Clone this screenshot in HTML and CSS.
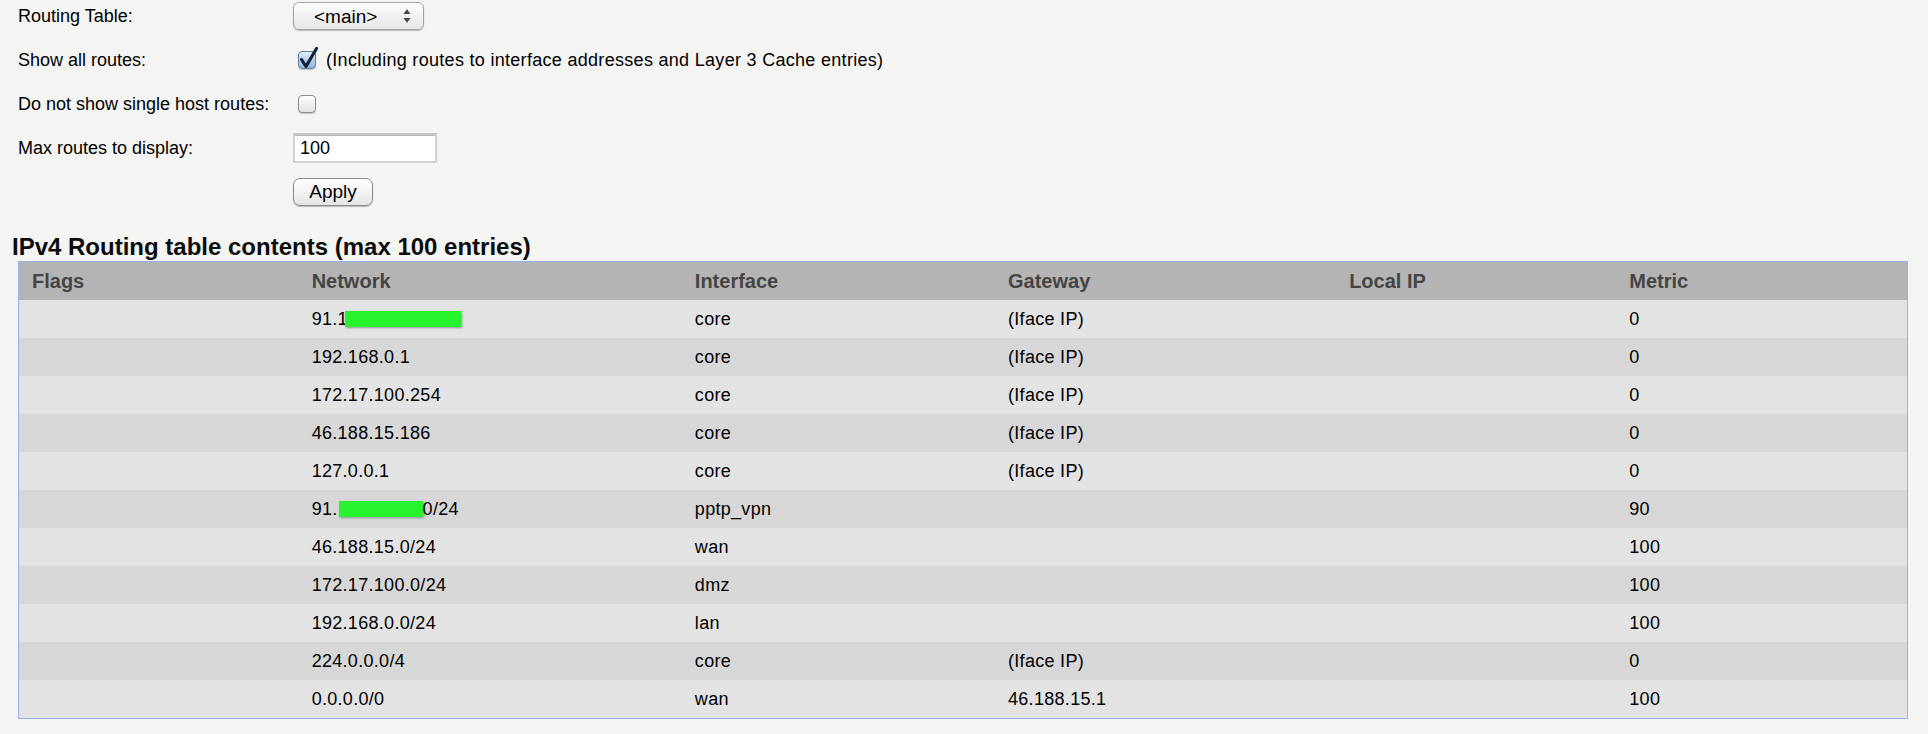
FILE: index.html
```html
<!DOCTYPE html>
<html lang="en">
<head>
    <meta charset="UTF-8">
    <title>Routing Table</title>
    <link rel="stylesheet" href="styles.css">
</head>
<body>

<form class="options">
    <label>Routing Table:</label>
    <div>
        <span class="select-wrap">
            <select class="select">
                <option>&lt;main&gt;</option>
            </select>
            <svg class="select-arrows" width="10" height="18" viewBox="0 0 10 18">
                <path d="M5 2 L8.5 7 L1.5 7 Z" fill="#4a4a4a"/>
                <path d="M5 16 L8.5 11 L1.5 11 Z" fill="#4a4a4a"/>
            </svg>
        </span>
    </div>

    <label>Show all routes:</label>
    <div class="check-row">
        <span class="checkbox checked">
            <svg width="24" height="26" viewBox="0 0 24 26">
                <path d="M4.5 13.5 L9 20.5 L19.5 2.5" fill="none" stroke="#14223a" stroke-width="3.2" stroke-linecap="round" stroke-linejoin="round"/>
            </svg>
        </span>
        <span class="hint">(Including routes to interface addresses and Layer 3 Cache entries)</span>
    </div>

    <label>Do not show single host routes:</label>
    <div class="check-row">
        <span class="checkbox"></span>
    </div>

    <label>Max routes to display:</label>
    <div>
        <input class="text-input" type="text" value="100">
    </div>

    <span></span>
    <div>
        <button class="btn" type="button">Apply</button>
    </div>
</form>

<h2>IPv4 Routing table contents (max 100 entries)</h2>

<table class="routes">
    <colgroup>
        <col style="width: 280px">
        <col style="width: 383px">
        <col style="width: 313px">
        <col style="width: 341px">
        <col style="width: 280px">
        <col style="width: 291px">
    </colgroup>
    <thead>
        <tr>
            <th>Flags</th>
            <th>Network</th>
            <th>Interface</th>
            <th>Gateway</th>
            <th>Local IP</th>
            <th>Metric</th>
        </tr>
    </thead>
    <tbody>
        <tr>
            <td></td>
            <td>91.1<span class="masked first"></span></td>
            <td>core</td>
            <td>(Iface IP)</td>
            <td></td>
            <td>0</td>
        </tr>
        <tr>
            <td></td>
            <td>192.168.0.1</td>
            <td>core</td>
            <td>(Iface IP)</td>
            <td></td>
            <td>0</td>
        </tr>
        <tr>
            <td></td>
            <td>172.17.100.254</td>
            <td>core</td>
            <td>(Iface IP)</td>
            <td></td>
            <td>0</td>
        </tr>
        <tr>
            <td></td>
            <td>46.188.15.186</td>
            <td>core</td>
            <td>(Iface IP)</td>
            <td></td>
            <td>0</td>
        </tr>
        <tr>
            <td></td>
            <td>127.0.0.1</td>
            <td>core</td>
            <td>(Iface IP)</td>
            <td></td>
            <td>0</td>
        </tr>
        <tr>
            <td></td>
            <td>91.<span class="masked net"></span>0/24</td>
            <td>pptp_vpn</td>
            <td></td>
            <td></td>
            <td>90</td>
        </tr>
        <tr>
            <td></td>
            <td>46.188.15.0/24</td>
            <td>wan</td>
            <td></td>
            <td></td>
            <td>100</td>
        </tr>
        <tr>
            <td></td>
            <td>172.17.100.0/24</td>
            <td>dmz</td>
            <td></td>
            <td></td>
            <td>100</td>
        </tr>
        <tr>
            <td></td>
            <td>192.168.0.0/24</td>
            <td>lan</td>
            <td></td>
            <td></td>
            <td>100</td>
        </tr>
        <tr>
            <td></td>
            <td>224.0.0.0/4</td>
            <td>core</td>
            <td>(Iface IP)</td>
            <td></td>
            <td>0</td>
        </tr>
        <tr>
            <td></td>
            <td>0.0.0.0/0</td>
            <td>wan</td>
            <td>46.188.15.1</td>
            <td></td>
            <td>100</td>
        </tr>
    </tbody>
</table>

</body>
</html>
```

FILE: styles.css
```css
body {
    margin: 0;
    padding: 0 12px;
    background-color: #f4f4f2;
    font-family: "Liberation Sans", Arial, sans-serif;
    font-size: 18px;
    color: #000;
}

/* form with the filter options */
.options {
    display: grid;
    grid-template-columns: 275px auto;
    grid-auto-rows: 32px;
    row-gap: 12px;
    align-items: center;
    margin-left: 6px;
}

.options label {
    white-space: nowrap;
}

.select-wrap {
    position: relative;
    display: inline-block;
    vertical-align: middle;
}

.select {
    -webkit-appearance: none;
    appearance: none;
    width: 131px;
    height: 28px;
    padding: 0 0 0 20px;
    border: 1px solid #a3a3a3;
    border-radius: 6px;
    background: linear-gradient(#ffffff, #f1f1f1 50%, #e6e6e6);
    box-shadow: 0 1px 1px rgba(0, 0, 0, 0.25);
    font-family: "Liberation Sans", Arial, sans-serif;
    font-size: 19px;
    color: #000;
}

.select-arrows {
    position: absolute;
    right: 12px;
    top: 5px;
    pointer-events: none;
}

.check-row {
    display: flex;
    align-items: center;
    gap: 10px;
    padding-left: 5px;
    white-space: nowrap;
}

.hint {
    letter-spacing: 0.3px;
}

.checkbox {
    position: relative;
    width: 16px;
    height: 16px;
    border: 1px solid #8f8f8f;
    border-radius: 4px;
    background: linear-gradient(#fdfdfd, #ececec 60%, #e2e2e2);
    box-shadow: 0 1px 1px rgba(0, 0, 0, 0.2);
    flex-shrink: 0;
}

.checkbox.checked {
    border-color: #5c7ea8;
    background: linear-gradient(#e4effc, #b2cdee 55%, #8db4e6);
}

.checkbox svg {
    position: absolute;
    left: -2px;
    top: -6px;
}

.text-input {
    width: 144px;
    height: 30px;
    box-sizing: border-box;
    padding: 0 0 0 5px;
    border: 2px solid #d2d2d2;
    border-top-color: #c4c4c4;
    background: #fff;
    box-shadow: inset 0 1px 0 #b8b8b8;
    font-family: "Liberation Sans", Arial, sans-serif;
    font-size: 18px;
    color: #000;
}

.btn {
    width: 80px;
    height: 28px;
    padding: 0;
    border: 1px solid #8c8c8c;
    border-radius: 7px;
    background: linear-gradient(#ffffff, #f3f3f3 50%, #e4e4e4);
    box-shadow: 0 1px 1px rgba(0, 0, 0, 0.25);
    font-family: "Liberation Sans", Arial, sans-serif;
    font-size: 19px;
    color: #000;
}

h2 {
    margin: 25px 0 1px 0;
    font-size: 24px;
    line-height: 27px;
    font-weight: bold;
    color: #0d0d0d;
}

/* routing table */
.routes {
    margin-left: 6px;
    width: 1890px;
    table-layout: fixed;
    border-collapse: collapse;
    border: 1px solid #94b3ee;
}

.routes th,
.routes td {
    height: 38px;
    padding: 0 13px;
    text-align: left;
    white-space: nowrap;
}

.routes td {
    letter-spacing: 0.3px;
}

.routes th {
    background-color: #b4b4b4;
    color: #454545;
    font-size: 20px;
    font-weight: bold;
}

.routes tbody tr:nth-child(odd) {
    background-color: #e3e3e3;
}

.routes tbody tr:nth-child(even) {
    background-color: #d7d7d7;
}

.masked {
    display: inline-block;
    height: 16px;
    vertical-align: -2px;
    background-color: #27f22e;
    box-shadow: 1px 1px 2px rgba(0, 0, 0, 0.35);
}

.masked.first {
    width: 116px;
    margin-left: -3px;
}

.masked.net {
    width: 84px;
    margin-left: 1px;
}
```
